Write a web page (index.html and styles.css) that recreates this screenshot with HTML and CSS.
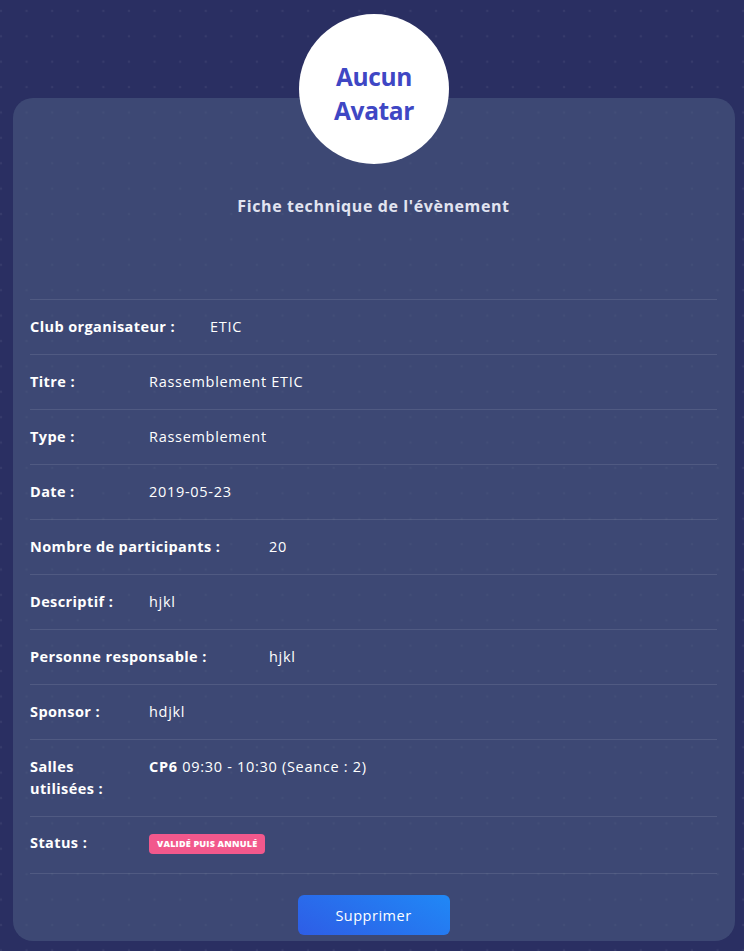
FILE: index.html
```html
<!DOCTYPE html>
<html lang="fr">
<head>
<meta charset="utf-8">
<title>Fiche technique</title>
<link rel="stylesheet" href="styles.css">
</head>
<body>
<div class="page">
  <div class="avatar"><span>Aucun<br>Avatar</span></div>
  <div class="card">
    <h2 class="title">Fiche technique de l'évènement</h2>
    <div class="rows">
      <div class="row lw-180"><div class="label">Club organisateur :</div><div class="value">ETIC</div></div>
      <div class="row"><div class="label">Titre :</div><div class="value">Rassemblement ETIC</div></div>
      <div class="row"><div class="label">Type :</div><div class="value">Rassemblement</div></div>
      <div class="row"><div class="label">Date :</div><div class="value">2019-05-23</div></div>
      <div class="row lw-239"><div class="label">Nombre de participants :</div><div class="value">20</div></div>
      <div class="row"><div class="label">Descriptif :</div><div class="value">hjkl</div></div>
      <div class="row lw-239"><div class="label">Personne responsable :</div><div class="value">hjkl</div></div>
      <div class="row"><div class="label">Sponsor :</div><div class="value">hdjkl</div></div>
      <div class="row"><div class="label">Salles utilisées :</div><div class="value"><b>CP6</b> 09:30 - 10:30 (Seance : 2)</div></div>
      <div class="row row-status"><div class="label">Status :</div><div class="value"><span class="badge">Validé puis annulé</span></div></div>
    </div>
    <div class="footer">
      <button class="btn" type="button">Supprimer</button>
    </div>
  </div>
</div>
</body>
</html>
```
FILE: styles.css
```css
html, body {
  margin: 0;
  padding: 0;
}
body {
  background-color: #2a2f62;
  background-image: radial-gradient(circle, rgba(255,255,255,0.06) 1.2px, transparent 1.6px);
  background-size: 25.6px 25.4px;
  background-position: -11.8px -1.8px;
  font-family: "Open Sans", "Noto Sans", sans-serif;
  color: #fff;
  min-height: 951px;
}
.page {
  padding: 14px 9px 0 13px;
}
.avatar {
  position: relative;
  z-index: 1;
  width: 150px;
  height: 150px;
  margin: 0 auto;
  border-radius: 50%;
  background: #fff;
  display: flex;
  align-items: center;
  justify-content: center;
  text-align: center;
}
.avatar span {
  font-family: "Open Sans", "Noto Sans", sans-serif;
  font-weight: 700;
  font-size: 24.5px;
  line-height: 34px;
  color: #3f47c4;
  letter-spacing: -0.4px;
  padding-top: 9px;
}
.card {
  margin-top: -66px;
  background: rgba(78, 96, 132, 0.52);
  border-radius: 20px;
  padding: 97px 18px 6px 17px;
}
.title {
  margin: 0 0 82px;
  font-size: 16px;
  line-height: 22px;
  font-weight: 700;
  text-align: center;
  color: #e2e4f0;
  letter-spacing: 0.6px;
}
.row {
  display: grid;
  grid-template-columns: 119px 1fr;
  align-items: start;
  border-top: 1px solid rgba(255,255,255,0.1);
  padding: 16px 0;
  font-size: 14.5px;
  line-height: 22px;
}
.row.lw-180 { grid-template-columns: 180px 1fr; }
.row.lw-239 { grid-template-columns: 239px 1fr; }
.row-status { padding: 16px 0 17px; }
.row-status .label { margin-top: -1px; }
.row-status .value { padding-top: 1px; }
.label {
  font-weight: 700;
  padding-right: 16px;
  letter-spacing: 0.4px;
}
.value {
  font-weight: 400;
  letter-spacing: 0.7px;
}
.value b { font-weight: 700; }
.badge {
  display: inline-block;
  background: #f2588c;
  color: #fff;
  font-size: 9px;
  line-height: 20px;
  height: 20px;
  font-weight: 800;
  text-transform: uppercase;
  padding: 0 8px;
  border-radius: 4px;
  letter-spacing: 0.2px;
  vertical-align: top;
}
.footer {
  border-top: 1px solid rgba(255,255,255,0.1);
  padding-top: 21px;
  display: flex;
  justify-content: center;
}
.btn {
  width: 152px;
  height: 40px;
  border: 0;
  border-radius: 6px;
  background: linear-gradient(30deg, #2e5de6 0%, #2088f6 100%);
  color: #fff;
  font-family: "Open Sans", "Noto Sans", sans-serif;
  font-size: 14.5px;
  font-weight: 400;
  letter-spacing: 0.5px;
}
```
